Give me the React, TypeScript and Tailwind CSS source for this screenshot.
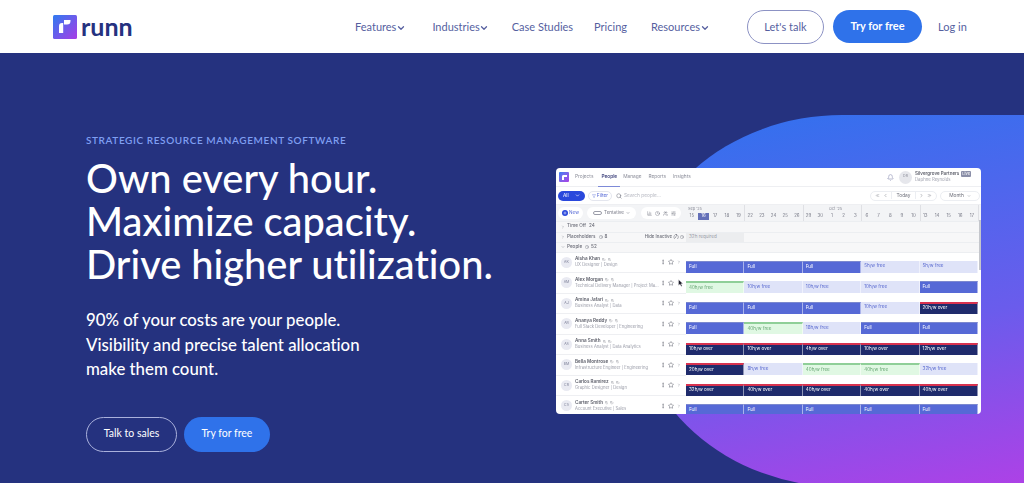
import { ChevronDown, ChevronLeft, ChevronRight, ChevronsLeft, ChevronsRight, EllipsisVertical, Filter, Plus, Search, Star, Clock, Bell, BarChart3, Users, Tag, SlidersHorizontal } from "lucide-react";

type Kind = "full" | "free" | "green" | "over";
type Cell = { label: string; kind: Kind };

const full: Cell = { label: "Full", kind: "full" };
const free = (h: number): Cell => ({ label: `${h}h/w free`, kind: "free" });
const green = (h: number): Cell => ({ label: `${h}h/w free`, kind: "green" });
const over = (h: number): Cell => ({ label: `${h}h/w over`, kind: "over" });

const people: { initials: string; name: string; role: string; cells: Cell[] }[] = [
  { initials: "AK", name: "Aisha Khan", role: "UX Designer | Design", cells: [full, full, full, free(5), free(5)] },
  { initials: "AM", name: "Alex Morgan", role: "Technical Delivery Manager | Project Ma...", cells: [green(40), free(10), free(10), free(10), full] },
  { initials: "AJ", name: "Amina Jafari", role: "Business Analyst | Data", cells: [full, full, full, free(10), over(20)] },
  { initials: "AR", name: "Ananya Reddy", role: "Full Stack Developer | Engineering", cells: [full, green(40), free(18), full, full] },
  { initials: "AS", name: "Anna Smith", role: "Business Analyst | Data Analytics", cells: [over(10), over(10), over(4), over(10), over(12)] },
  { initials: "BM", name: "Bella Montrose", role: "Infrastructure Engineer | Engineering", cells: [over(20), free(8), green(40), green(40), free(32)] },
  { initials: "CR", name: "Carlos Ramirez", role: "Graphic Designer | Design", cells: [over(32), over(40), over(40), over(40), over(40)] },
  { initials: "CS", name: "Carter Smith", role: "Account Executive | Sales", cells: [full, full, full, full, full] },
];

const days = [15, 16, 17, 18, 19, 22, 23, 24, 25, 26, 29, 30, 1, 2, 3, 6, 7, 8, 9, 10, 13, 14, 15, 16, 17];

const cellStyles: Record<Kind, string> = {
  full: "bg-[#5669d6] text-white border-t border-[#7b88cf]",
  free: "bg-[#dfe3f8] text-[#5a6ad0]",
  green: "bg-[#e0f8e3] text-[#6aa877] border-t-2 border-[#8fcf98]",
  over: "bg-[#1f2b6c] text-white border-t-2 border-[#d8324f]",
};

function NavItem({ label, chevron, className }: { label: string; chevron?: boolean; className: string }) {
  return (
    <a className={`flex items-center whitespace-nowrap pt-[2px] text-[11px] text-[#565f9f] ${className}`}>
      {label}
      {chevron && <ChevronDown size={10} strokeWidth={3} className="-mr-[1.5px] -ml-[0.5px]" />}
    </a>
  );
}

function Logo() {
  return (
    <svg width="24" height="24" viewBox="0 0 24 24" className="shrink-0">
      <defs>
        <linearGradient id="logo" x1="0" y1="0" x2="1" y2="1">
          <stop offset="0" stopColor="#2f7bf0" />
          <stop offset="1" stopColor="#a83ce6" />
        </linearGradient>
      </defs>
      <rect width="24" height="24" rx="1.5" fill="url(#logo)" />
      <path d="M6 18V11a3 3 0 0 1 3-3h1.2V18z M11 9.5V5h6.5v1a3.5 3.5 0 0 1-3.5 3.5z" fill="#fff" />
    </svg>
  );
}

function PersonRow({ person }: { person: (typeof people)[number] }) {
  return (
    <div className="flex h-[20.5px]">
      <div className="flex w-[130px] items-center border-b border-[#eeeff2] pl-[5px] text-[#9a9ca8]">
        <div className="flex h-[11px] w-[11px] shrink-0 items-center justify-center rounded-full bg-[#e9eaf2] text-[3.5px] text-[#7a7d95]">
          {person.initials}
        </div>
        <div className="ml-[3px] w-[86px] shrink-0 overflow-hidden whitespace-nowrap leading-[6px]">
          <div className="flex items-center gap-[2px] text-[4.6px] font-semibold text-[#5f616c]">
            {person.name}
            <Tag size={3.5} />
            <Tag size={3.5} />
          </div>
          <div className="text-[4.2px]">{person.role}</div>
        </div>
        <EllipsisVertical size={6} className="ml-[-1px] text-[#5f616c]" />
        <Star size={6} className="ml-[2px] text-[#5f616c]" />
        <ChevronRight size={4} className="ml-[3px] text-[#5f616c]" />
      </div>
      <div className="flex w-[292px] items-end pb-[0.5px]">
        {person.cells.map((cell, i) => (
          <div
            key={i}
            className={`flex h-[12px] w-[58.4px] items-center border-r-[0.5px] border-r-[#ffffff80] pl-[3px] text-[4.6px] ${cellStyles[cell.kind]}`}
          >
            {cell.label}
          </div>
        ))}
      </div>
    </div>
  );
}

function AppCard() {
  return (
    <div className="relative ml-[67px] mt-[115px] h-[246px] w-[425px] shrink-0 overflow-hidden rounded-[4px] bg-white font-['Inter',sans-serif] blur-[0.25px]">
      <div className="flex h-[19px] items-center border-b border-[#eeeff2] pl-[3px] text-[4.8px] text-[#8a8c98]">
        <div className="flex h-[10px] w-[10px] items-center justify-center rounded-[1px] bg-gradient-to-br from-[#2f7bf0] to-[#a83ce6]">
          <div className="h-[5px] w-[5px] rounded-tl-[2px] border-l-2 border-t-2 border-white" />
        </div>
        <span className="ml-[6px]">Projects</span>
        <span className="relative ml-[8px] font-medium text-[#2d3270]">
          People
          <span className="absolute -bottom-[6px] -left-[3px] -right-[3px] h-px bg-[#7d8ad8]" />
        </span>
        <span className="ml-[6px]">Manage</span>
        <span className="ml-[7px]">Reports</span>
        <span className="ml-[7px]">Insights</span>
        <Bell size={7} className="ml-auto text-[#8f93b5]" />
        <div className="ml-[5px] flex h-[13px] w-[13px] items-center justify-center rounded-full bg-[#e6e7ec] text-[3.5px]">DR</div>
        <div className="ml-[3px] w-[66px] leading-[6px]">
          <div className="flex items-center gap-[2px] whitespace-nowrap text-[4.5px] font-semibold text-[#5f616c]">
            Silvergrove Partners
            <span className="rounded-[1px] bg-[#8b8fa8] px-[1px] text-[4px] font-normal text-white">Live</span>
          </div>
          <div className="text-[4.3px] text-[#a0a2ae]">Daphne Reynolds</div>
        </div>
      </div>

      <div className="flex h-[18px] items-center border-b border-[#eeeff2] pl-[2px] pr-[1px] text-[4.8px] text-[#8a8c98]">
        <div className="flex h-[10px] w-[27px] items-center justify-between rounded-full bg-[#2a48dc] px-[5px] text-white">
          All
          <ChevronDown size={5} strokeWidth={3} />
        </div>
        <div className="ml-[3px] flex h-[10px] w-[24px] items-center justify-center gap-[1px] rounded-full border border-[#e4e6ee] text-[#5669d6]">
          <Filter size={4} />
          Filter
        </div>
        <Search size={6} className="ml-[4px] text-[#6b6d78]" />
        <span className="ml-[2px] text-[#b7b9c2]">Search people...</span>
        <div className="ml-auto flex h-[10px] w-[67px] items-center justify-between rounded-full border border-[#eceef2] px-[4px] text-[#6b6d78]">
          <ChevronsLeft size={5} />
          <ChevronLeft size={5} />
          <span className="border-x border-[#eceef2] px-[5px]">Today</span>
          <ChevronRight size={5} />
          <ChevronsRight size={5} />
        </div>
        <div className="ml-[3px] flex h-[10px] w-[40px] items-center justify-center gap-[3px] rounded-full border border-[#eceef2] text-[#6b6d78]">
          Month
          <ChevronDown size={4} />
        </div>
      </div>

      <div className="flex h-[16px] bg-[#f3f4f6]">
        <div className="flex w-[130px] items-center pl-[2px] text-[4.6px] text-[#777986]">
          <div className="flex h-[12px] w-[25px] items-center justify-center gap-[1px] rounded-full bg-white text-[#5669d6]">
            <span className="flex h-[6px] w-[6px] items-center justify-center rounded-full bg-[#2a48dc] text-white">
              <Plus size={4} strokeWidth={3} />
            </span>
            New
          </div>
          <div className="ml-[4px] flex h-[12px] w-[49px] items-center justify-center gap-[2px] rounded-full bg-white">
            <span className="h-[4px] w-[9px] rounded-full border-[0.5px] border-[#9a9ca8]" />
            Tentative
            <ChevronDown size={4} strokeWidth={3} />
          </div>
          <div className="ml-[5px] flex h-[12px] w-[40px] items-center justify-center gap-[3px] rounded-full bg-white">
            <BarChart3 size={5} />
            <Clock size={5} />
            <Users size={5} />
            <SlidersHorizontal size={5} />
          </div>
        </div>
        <div className="relative w-[295px] pt-[1px]">
          <div className="flex h-[5px] text-[3.8px] leading-[5px] text-[#888a96]">
            <span className="ml-[2px] w-[116px]">Sep '25</span>
            <span className="ml-[25px]">Oct '25</span>
          </div>
          <div className="mt-[2px] flex text-[4.4px] text-[#777986]">
            {days.map((d, i) => (
              <span
                key={i}
                className={`flex h-[7px] w-[11.68px] items-center justify-center ${i === 1 ? "bg-[#6470b8] text-white" : ""}`}
              >
                {d}
              </span>
            ))}
          </div>
          {[58, 116.5, 175, 234, 292].map((x) => (
            <span key={x} className="absolute top-0 h-[16px] w-px bg-[#dfe0e4]" style={{ left: x }} />
          ))}
        </div>
      </div>

      <div className="flex h-[10.5px] items-center gap-[2px] border-t border-[#eceef1] bg-[#f7f7f8] pl-[5px] text-[4.6px] font-medium text-[#6b6d78]">
        <ChevronRight size={4} />
        Time Off
        <span className="ml-[1px]">24</span>
      </div>
      <div className="flex h-[10.5px] items-center border-t border-[#eceef1] bg-[#f7f7f8] pl-[5px] text-[4.6px] font-medium text-[#6b6d78]">
        <div className="flex w-[125px] items-center gap-[2px]">
          <ChevronRight size={4} />
          Placeholders
          <Clock size={4} className="ml-[1px]" />
          8
          <span className="ml-auto mr-[1px] flex items-center gap-[1px] pr-[1px] text-[4.4px]">
            Hide Inactive (7)
            <Clock size={4} />
          </span>
        </div>
        <div className="flex h-full w-[58.4px] items-center bg-[#ecedef] pl-[3px] font-normal text-[#9a9ca8]">32h required</div>
      </div>
      <div className="flex h-[10.5px] items-center gap-[2px] border-y border-[#eceef1] bg-[#f7f7f8] pl-[5px] text-[4.6px] font-medium text-[#6b6d78]">
        <ChevronDown size={4} />
        People
        <Clock size={4} className="ml-[1px]" />
        52
      </div>

      {people.map((p) => (
        <PersonRow key={p.name} person={p} />
      ))}

      <div className="absolute right-0 top-[52px] h-[50px] w-[2px] bg-[#c4c6cc]" />
      {/* pointer over Alex's row */}
      <svg width="6" height="8" viewBox="0 0 6 8" className="absolute left-[122px] top-[111px]">
        <path d="M0.5 0.5V6.5L2 5.2L3.2 7.6L4.2 7.1L3 4.8H5z" fill="#1d1d2a" stroke="#fff" strokeWidth="0.4" />
      </svg>
    </div>
  );
}

export default function App() {
  return (
    <div className="h-[483px] w-[1024px] overflow-hidden font-['Lato',sans-serif] [font-variant-ligatures:none]">
      <header className="flex h-[53px] items-center bg-white pl-[53px]">
        <Logo />
        <span className="ml-[4px] w-[51px] text-[25px] font-bold leading-none text-[#25327f]">
          runn
        </span>
        <NavItem label="Features" chevron className="ml-[223px]" />
        <NavItem label="Industries" chevron className="ml-[28px]" />
        <NavItem label="Case Studies" className="ml-[24px]" />
        <NavItem label="Pricing" className="ml-[21px]" />
        <NavItem label="Resources" chevron className="ml-[24px]" />
        <a className="ml-[39px] flex h-[34px] w-[77px] items-center justify-center rounded-full border border-[#8c92c4] pt-[1px] text-[11px] text-[#565f9f]">
          Let's talk
        </a>
        <a className="ml-[9px] flex h-[33px] w-[89px] items-center justify-center rounded-full bg-[#2f72ea] text-[11px] font-bold text-white">
          Try for free
        </a>
        <NavItem label="Log in" className="ml-[16px]" />
      </header>

      <main className="relative flex h-[430px] overflow-hidden bg-[#25327f]">
        <div className="absolute left-[633px] top-[62px] h-[372px] w-[420px] bg-[linear-gradient(170deg,#2f72ee_0%,#6a5cec_58%,#b040e6_100%)] [border-radius:209px_0_0_209px/186px_0_0_186px]" />
        <div className="relative w-[489px] shrink-0 pl-[86px] pt-[80px] text-white">
          <p className="text-[10px] font-semibold uppercase leading-[14px] tracking-[0.6px] text-[#7f9ff2]">
            Strategic resource management software
          </p>
          <h1 className="mt-[9px] whitespace-nowrap text-[39.8px] font-medium leading-[43px]">
            Own every hour.
            <br />
            Maximize capacity.
            <br />
            Drive higher utilization.
          </h1>
          <p className="mt-[23px] whitespace-nowrap text-[16.8px] font-medium leading-[24.5px]">
            90% of your costs are your people.
            <br />
            Visibility and precise talent allocation
            <br />
            make them count.
          </p>
          <div className="mt-[35px] flex gap-[7px] text-[10.5px]">
            <a className="flex h-[35px] w-[91px] items-center justify-center rounded-full border border-[#aab1dc]">Talk to sales</a>
            <a className="flex h-[35px] w-[86px] items-center justify-center rounded-full bg-[#2f72ea]">Try for free</a>
          </div>
        </div>
        <AppCard />
      </main>
    </div>
  );
}
